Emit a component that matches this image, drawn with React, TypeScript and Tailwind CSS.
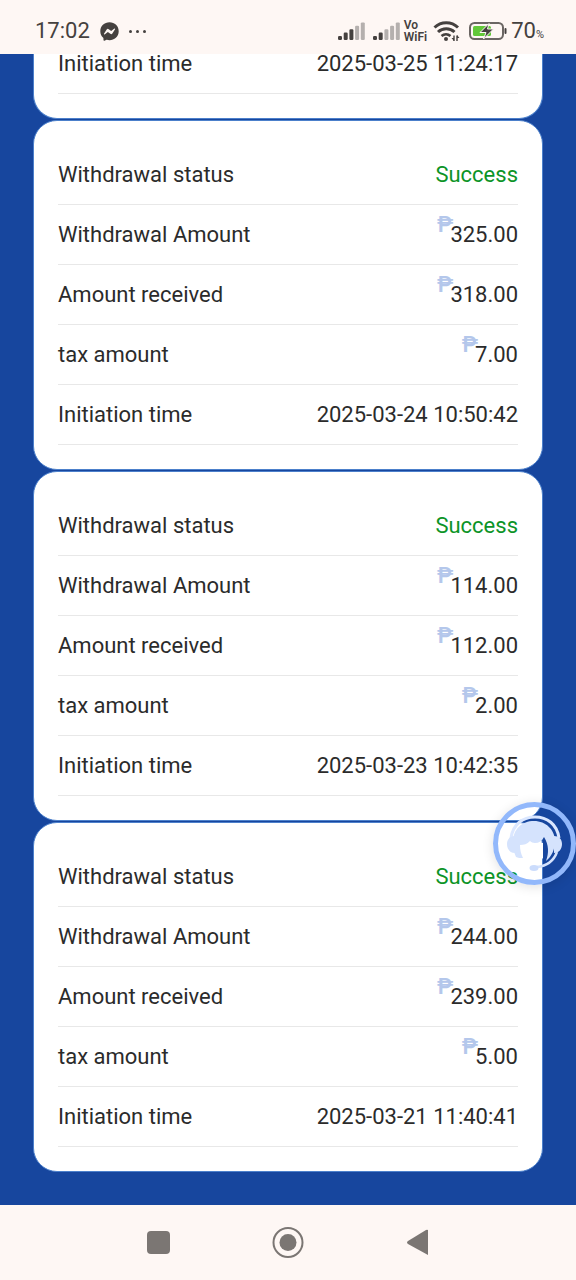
import type { ReactNode } from 'react';
import { FaFacebookMessenger } from 'react-icons/fa6';

type Withdrawal = {
    amount: string;
    received: string;
    tax: string;
    time: string;
};

const withdrawals: Withdrawal[] = [
    { amount: '325.00', received: '318.00', tax: '7.00', time: '2025-03-24 10:50:42' },
    { amount: '114.00', received: '112.00', tax: '2.00', time: '2025-03-23 10:42:35' },
    { amount: '244.00', received: '239.00', tax: '5.00', time: '2025-03-21 11:40:41' },
];

function Signal({ bars }: { bars: number }) {
    return (
        <svg width="27" height="18" viewBox="0 0 27 18" aria-hidden="true">
            {[0, 1, 2, 3, 4].map((i) => (
                <rect
                    key={i}
                    x={i * 5.7}
                    y={14 - i * 3.4}
                    width="4"
                    height={4 + i * 3.4}
                    rx="1.2"
                    fill={i < bars ? '#45413f' : '#b5b0ae'}
                />
            ))}
        </svg>
    );
}

function Wifi() {
    return (
        <svg width="28" height="22" viewBox="0 0 28 22" fill="none" stroke="#45413f" aria-hidden="true">
            <path d="M1.500 7.500a17 17 0 0 1 23.500 0" strokeWidth="3" />
            <path d="M5 12a12 12 0 0 1 16.500 0" strokeWidth="3" />
            <path d="M8.500 16a7 7 0 0 1 9 0" strokeWidth="2.6" />
            <circle cx="13" cy="19" r="2" fill="#45413f" stroke="none" />
            <path d="M21 15.500v5.500M24 15.500v5.500" strokeWidth="1.4" />
            <path d="M18.500 18l2.500 3v-3zM26.500 18l-2.500-3v3z" fill="#45413f" stroke="none" />
        </svg>
    );
}

function Battery() {
    return (
        <svg width="38" height="20" viewBox="0 0 38 20" fill="none" aria-hidden="true">
            <rect x="1" y="2" width="33" height="16" rx="4.500" stroke="#6b6663" strokeWidth="2" />
            <rect x="4" y="5" width="18" height="10" rx="1.500" fill="#62c839" />
            <path d="M36.500 8v4" stroke="#45413f" strokeWidth="2" strokeLinecap="round" />
            <path d="M20 2.500l-9 9h6L14.500 18l10-10h-6z" fill="#45413f" stroke="#fef7f4" strokeWidth="1" />
        </svg>
    );
}

function StatusBar() {
    return (
        <header className="z-10 flex h-[54px] shrink-0 items-center bg-[#fef7f4] pt-2 pr-8 pl-[35px] text-[#45413f]">
            <span className="text-[22px] leading-6">17:02</span>
            <FaFacebookMessenger className="ml-[10px] size-[19px]" />
            <span className="ml-[10px] flex gap-1">
                <i className="size-[3px] rounded-full bg-current" />
                <i className="size-[3px] rounded-full bg-current" />
                <i className="size-[3px] rounded-full bg-current" />
            </span>
            <div className="ml-auto flex items-center">
                <div className="flex gap-2">
                    <Signal bars={3} />
                    <Signal bars={2} />
                </div>
                <span className="mr-[6px] ml-1 text-xs leading-3 font-semibold">
                    Vo
                    <br />
                    WiFi
                </span>
                <Wifi />
                <span className="mr-1 ml-2">
                    <Battery />
                </span>
                <span className="text-[22px] leading-6">70</span>
                <span className="mt-2 text-[11px] leading-4">%</span>
            </div>
        </header>
    );
}

function Money({ value }: { value: string }) {
    return (
        <span className="flex items-center">
            <span className="-mr-[3px] mb-5 leading-4 font-semibold text-[#b4c7eb]">₱</span>
            {value}
        </span>
    );
}

function Row({ label, children }: { label: string; children: ReactNode }) {
    return (
        <div className="flex h-[60px] items-center justify-between border-b border-[#e8e8e8]">
            <dt>{label}</dt>
            <dd>{children}</dd>
        </div>
    );
}

function WithdrawalCard({ item }: { item: Withdrawal }) {
    return (
        <dl className="rounded-3xl border border-[#4c80cb] bg-white p-6">
            <Row label="Withdrawal status">
                <span className="text-[#0c9427]">Success</span>
            </Row>
            <Row label="Withdrawal Amount">
                <Money value={item.amount} />
            </Row>
            <Row label="Amount received">
                <Money value={item.received} />
            </Row>
            <Row label="tax amount">
                <Money value={item.tax} />
            </Row>
            <Row label="Initiation time">{item.time}</Row>
        </dl>
    );
}

function SupportButton() {
    return (
        <button
            type="button"
            aria-label="Customer support"
            className="absolute right-0 bottom-[395px] z-20 rounded-full shadow-[0_2px_12px_rgba(0,0,0,0.12)]"
        >
            <svg width="83" height="83" viewBox="0 0 83 83" fill="none" aria-hidden="true">
                <circle cx="41.500" cy="41.500" r="39" stroke="#92b8fb" strokeWidth="5" />
                {/* headband */}
                <path d="M18 36C20 22 30 15 42 15s22 7 24 21" stroke="#dbe7ff" strokeWidth="3" />
                {/* face */}
                <path d="M26 42c5 0 9-2 12-5 4 3 8 4 12 4v15c-3 3-6 5-9 5-8 0-14-7-15-19z" fill="#fff" />
                {/* hair */}
                <path
                    d="M23 55c-2-4-3-9-3-15 0-13 9-21 21-21s21 9 21 20c0 8-3 15-9 20 3-8 3-16-2-24-2 4-5 6-9 6-2 0-4-1-5-2-3 3-6 4-10 4 0 5 1 9 3 13-3 0-5 0-7-1z"
                    fill="#d5e3fd"
                />
                {/* ear cups */}
                <path d="M22 34v17c-5 0-8-4-8-9s3-8 8-8zM61 34v17c5 0 8-4 8-9s-3-8-8-8z" fill="#d5e3fd" />
                {/* microphone */}
                <path d="M64 50c-3 8-10 14-20 15" stroke="#d5e3fd" strokeWidth="2.500" />
                <ellipse cx="41" cy="66" rx="4.500" ry="3" fill="#cbdcfc" />
            </svg>
        </button>
    );
}

function NavBar() {
    return (
        <nav className="z-10 flex h-[75px] shrink-0 items-center justify-center gap-[98px] bg-[#fef7f4]">
            <button type="button" aria-label="Recent apps">
                <svg width="32" height="32" viewBox="0 0 32 32" aria-hidden="true">
                    <rect x="5" y="4" width="23" height="23" rx="4" fill="#7b7673" />
                </svg>
            </button>
            <button type="button" aria-label="Home">
                <svg width="32" height="32" viewBox="0 0 32 32" fill="none" aria-hidden="true">
                    <circle cx="16" cy="15.500" r="14.500" stroke="#7b7673" strokeWidth="2" />
                    <circle cx="16" cy="15.500" r="8.500" fill="#7b7673" />
                </svg>
            </button>
            <button type="button" aria-label="Back">
                <svg width="32" height="32" viewBox="0 0 32 32" aria-hidden="true">
                    <path d="M26 3v25L6 17q-2-1.500 0-3L24 3q1-.5 2 0z" fill="#7b7673" />
                </svg>
            </button>
        </nav>
    );
}

export default function App() {
    return (
        <div className="relative flex h-screen flex-col overflow-hidden bg-[#17469e] font-[Roboto,sans-serif]">
            <StatusBar />
            {/* column-reverse keeps the list scrolled to its end */}
            <main className="flex min-h-0 flex-1 flex-col-reverse overflow-y-auto [scrollbar-width:none]">
                <div className="flex flex-col gap-px px-[33px] pb-[33px] text-[22px] leading-6 text-[#2b2b2b]">
                    <dl className="rounded-b-3xl border border-t-0 border-[#4c80cb] bg-white px-6 pb-6">
                        <Row label="Initiation time">2025-03-25 11:24:17</Row>
                    </dl>
                    {withdrawals.map((item) => (
                        <WithdrawalCard key={item.time} item={item} />
                    ))}
                </div>
            </main>
            <SupportButton />
            <NavBar />
        </div>
    );
}
